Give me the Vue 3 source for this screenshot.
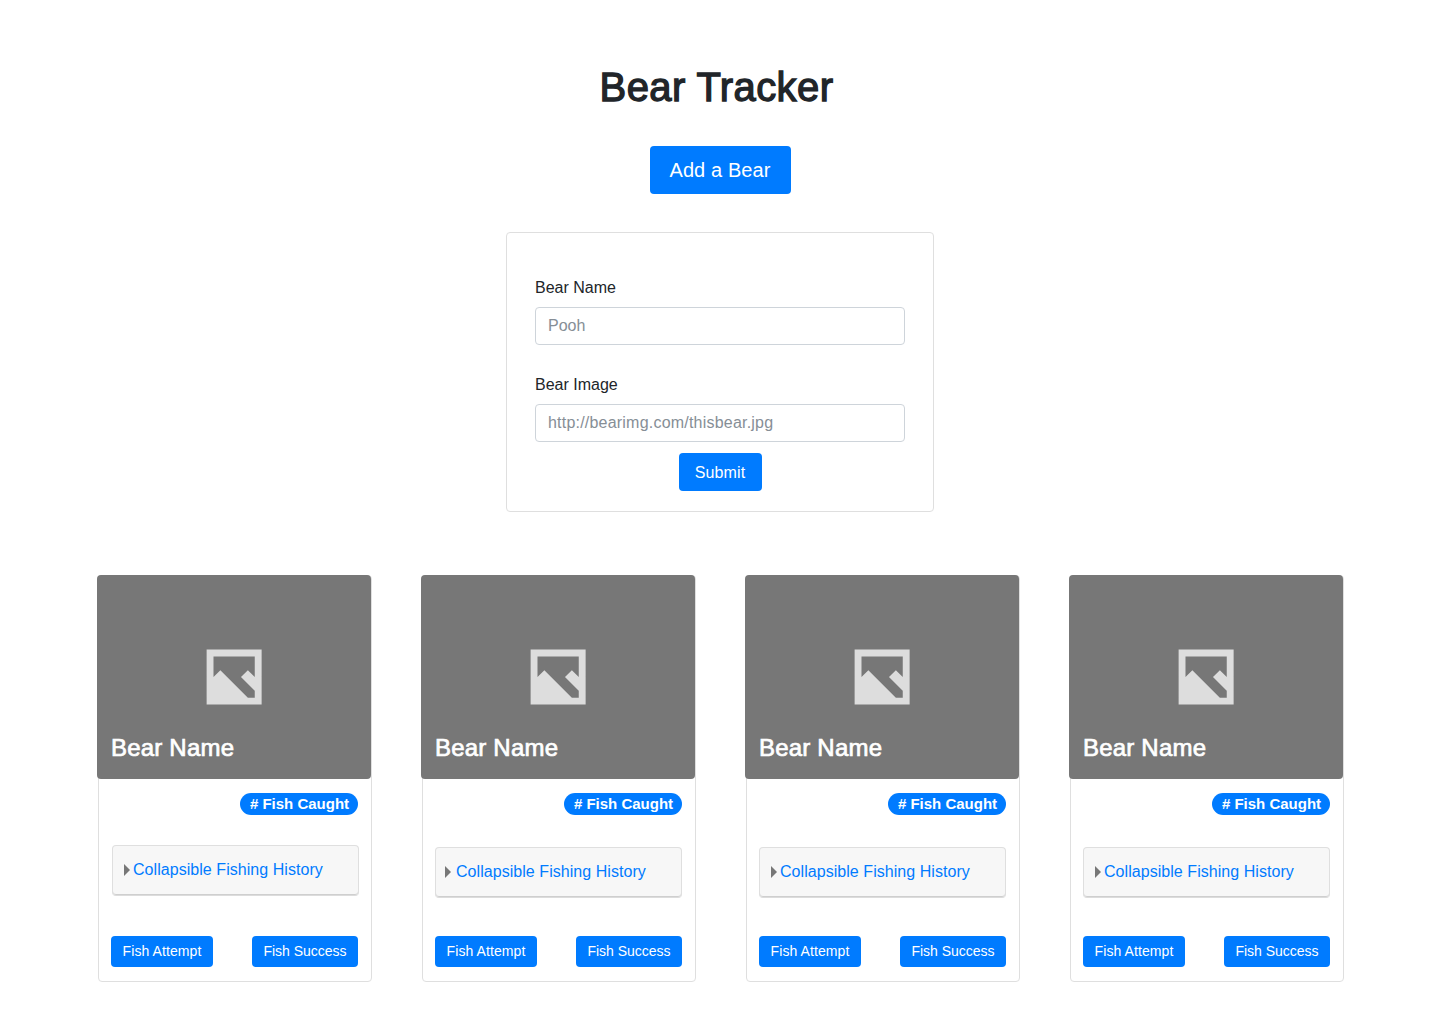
<script setup>
const bears = [
  { id: 1, variant: 'raised' },
  { id: 2, variant: 'spaced' },
  { id: 3, variant: 'regular' },
  { id: 4, variant: 'regular' },
]
</script>

<template>
  <main class="page">
    <h1 class="title">Bear Tracker</h1>
    <button class="btn btn-lg" type="button">Add a Bear</button>

    <form class="bear-form" @submit.prevent>
      <label class="label" for="bear-name">Bear Name</label>
      <input id="bear-name" class="input" type="text" placeholder="Pooh" />
      <label class="label" for="bear-image">Bear Image</label>
      <input id="bear-image" class="input url" type="text" placeholder="http://bearimg.com/thisbear.jpg" />
      <button class="btn btn-md" type="submit">Submit</button>
    </form>

    <section class="cards">
      <article v-for="bear in bears" :key="bear.id" class="card">
        <div class="photo">
          <svg class="photo-icon" viewBox="-0.09 -0.09 8.145 8.145" aria-hidden="true">
            <path fill="#ddd" fill-rule="evenodd" d="M0 0H8V8H0ZM1 1V4L2 3L6 7H7V6L5 4L6 3L7 4V1Z" />
          </svg>
          <h2 class="name">Bear Name</h2>
        </div>
        <span class="badge"># Fish Caught</span>
        <div class="history" :class="bear.variant">
          <svg class="caret" viewBox="0 0 6 12" aria-hidden="true"><path fill="#777" d="M0 0L6 6L0 12Z" /></svg>
          <a class="link">Collapsible Fishing History</a>
        </div>
        <div class="actions">
          <button class="btn btn-sm attempt" type="button">Fish Attempt</button>
          <button class="btn btn-sm success" type="button">Fish Success</button>
        </div>
      </article>
    </section>
  </main>
</template>

<style>
body {
  margin: 0;
  background: #fff;
}
</style>

<style scoped>
.page {
  box-sizing: border-box;
  height: 1024px;
  padding-top: 63px;
  display: flex;
  flex-direction: column;
  align-items: center;
  font-family: "Helvetica Neue", "Liberation Sans", Arial, sans-serif;
  font-size: 16px;
  line-height: 24px;
  color: #212529;
}
.title {
  margin: 0 7px 35px 0;
  font-size: 40px;
  line-height: 48px;
  font-weight: 400;
  letter-spacing: 0.4px;
  -webkit-text-stroke: 1.3px #212529;
}
.btn {
  box-sizing: border-box;
  padding: 0;
  border: 0;
  border-radius: 4px;
  background: #007bff;
  color: #fff;
  font-family: inherit;
  text-align: center;
  white-space: nowrap;
}
.btn-lg {
  width: 141px;
  height: 48px;
  flex: none;
  font-size: 20px;
  line-height: 30px;
  letter-spacing: 0.1px;
}
.btn-md {
  width: 83px;
  height: 38px;
  margin-top: 11px;
  padding-top: 2px;
  align-self: center;
  font-size: 16px;
  letter-spacing: 0.15px;
}
.btn-sm {
  height: 31px;
  padding-bottom: 2px;
  font-size: 14px;
}
.attempt {
  width: 102px;
  letter-spacing: 0.09px;
}
.success {
  width: 106px;
}
.bear-form {
  box-sizing: border-box;
  width: 428px;
  height: 280px;
  margin: 38px 0 63px;
  padding: 43px 28px 0;
  border: 1px solid #dfdfdf;
  border-radius: 4px;
  display: flex;
  flex-direction: column;
}
.label {
  margin-bottom: 7px;
}
.input {
  box-sizing: border-box;
  height: 38px;
  padding: 0 12px;
  border: 1px solid #ced4da;
  border-radius: 4px;
  font: inherit;
}
.url {
  letter-spacing: 0.21px;
}
.input::placeholder {
  color: #868e96;
  opacity: 1;
}
.input + .label {
  margin-top: 28px;
}
.cards {
  display: flex;
  gap: 50px;
  margin-left: 2px;
}
.card {
  box-sizing: border-box;
  width: 274px;
  height: 407px;
  border: 1px solid #dfdfdf;
  border-radius: 4px;
  display: flex;
  flex-direction: column;
}
.photo {
  box-sizing: border-box;
  width: 274px;
  height: 204px;
  margin: -1px 0 0 -2px;
  padding: 74px 14px 0;
  border-radius: 4px;
  background: #777;
}
.photo-icon {
  display: block;
  width: 56px;
  height: 56px;
  margin: 0 auto;
}
.name {
  margin: 28px 0 0;
  font-size: 24px;
  line-height: 29px;
  font-weight: 400;
  color: #fff;
  letter-spacing: 0.2px;
  -webkit-text-stroke: 0.7px #fff;
}
.badge {
  box-sizing: border-box;
  width: 118px;
  height: 22px;
  margin: 14px 13px 0 0;
  padding-left: 1px;
  align-self: flex-end;
  border-radius: 11px;
  background: #007bff;
  color: #fff;
  font-size: 15px;
  font-weight: 700;
  line-height: 22px;
  text-align: center;
}
.history {
  box-sizing: border-box;
  width: 247px;
  height: 51px;
  margin: 32px 0 38px 12px;
  padding: 0 0 2px 11px;
  border: 1px solid #dfdfdf;
  border-bottom-color: #dcdcdc;
  box-shadow: inset 0 -1px 0 #cfcfcf;
  border-radius: 4px;
  background: #f7f7f7;
  display: flex;
  align-items: center;
}
.history.raised {
  margin: 30px 0 40px 13px;
}
.history.spaced {
  padding-left: 9px;
}
.caret {
  width: 6px;
  height: 12px;
  margin: 1px 3px 0 0;
}
.spaced .caret {
  margin-right: 5px;
}
.link {
  color: #007bff;
  letter-spacing: 0.05px;
}
.actions {
  display: flex;
  justify-content: space-between;
  padding: 0 13px 0 12px;
}
</style>
